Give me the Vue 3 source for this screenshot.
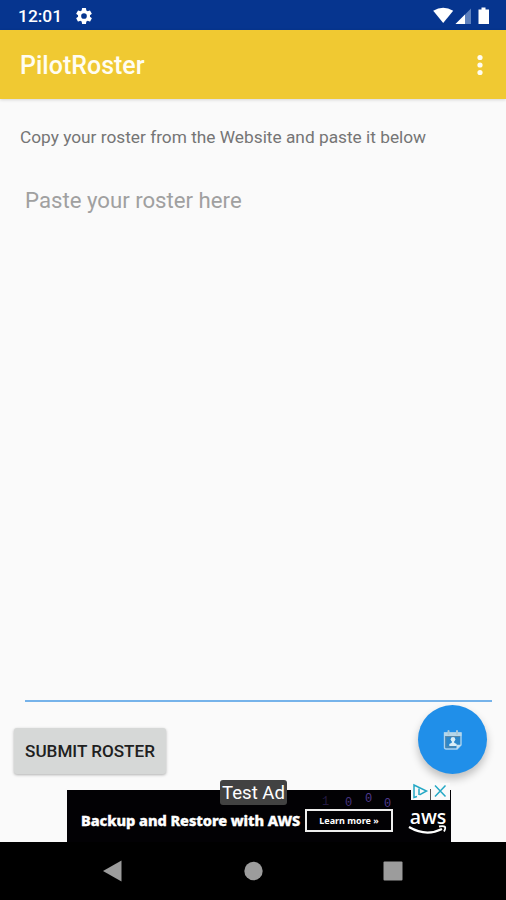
<template>
  <div class="screen">
    <header class="status-bar">
      <span class="clock">12:01</span>
      <svg class="gear" viewBox="0 0 24 24" width="20" height="20">
        <path fill="#fff" fill-rule="evenodd" d="M19.14 12.94c.04-.3.06-.61.06-.94s-.02-.64-.07-.94l2.03-1.58a.49.49 0 0 0 .12-.61l-1.92-3.32a.49.49 0 0 0-.59-.22l-2.39.96a7 7 0 0 0-1.62-.94l-.36-2.54a.48.48 0 0 0-.48-.41h-3.84a.48.48 0 0 0-.47.41l-.36 2.54a7.3 7.3 0 0 0-1.62.94l-2.39-.96a.48.48 0 0 0-.59.22L2.74 8.87a.48.48 0 0 0 .12.61l2.03 1.58a6 6 0 0 0 0 1.88l-2.03 1.58a.49.49 0 0 0-.12.61l1.92 3.32c.12.22.37.29.59.22l2.39-.96c.5.38 1.03.7 1.62.94l.36 2.54c.05.24.24.41.48.41h3.84c.24 0 .44-.17.47-.41l.36-2.54a7.3 7.3 0 0 0 1.62-.94l2.39.96c.22.08.47 0 .59-.22l1.92-3.32a.48.48 0 0 0-.12-.61zM12 15.4a3.4 3.4 0 1 1 0-6.8 3.4 3.4 0 0 1 0 6.8z" />
      </svg>
      <svg class="signals" viewBox="0 0 60 20" width="60" height="20">
        <path fill="#fff" d="M-.8 4.800Q9.200-1.500 19.200 4.800L9.200 17z" />
        <path fill="#5d80bd" d="M37 2.500v15.500H21.500z" />
        <path fill="#fff" d="M31 8.500v9.500h-9.500z" />
        <path fill="#fff" d="M47.500 1.500h4v2h3.500v14.500H44.500V3.500h3z" />
      </svg>
    </header>

    <div class="toolbar">
      <h1>PilotRoster</h1>
      <button class="more" aria-label="More options">
        <svg viewBox="0 0 6 22" width="6" height="22">
          <circle cx="3" cy="3.500" r="2.600" />
          <circle cx="3" cy="11" r="2.600" />
          <circle cx="3" cy="18.500" r="2.600" />
        </svg>
      </button>
    </div>

    <main class="content">
      <p class="hint">Copy your roster from the Website and paste it below</p>
      <div class="field">
        <textarea v-model="roster" class="roster" placeholder="Paste your roster here" spellcheck="false"></textarea>
      </div>
      <div class="actions">
        <button class="submit">SUBMIT ROSTER</button>
        <button class="fab" aria-label="Calendar">
          <svg viewBox="0 0 20 22" width="20" height="22">
            <path fill="#2a87cc" stroke="#a9d2ef" stroke-width="1.400" d="M1.500 4h16.500v12l-4 4H3q-1.500 0-1.500-1.500z" />
            <path fill="#b4d6ea" d="M1 3.500h17.500V7H1z" />
            <path fill="none" stroke="#68889a" stroke-width=".8" d="M2.800 7.500h14M2.800 7.500v10.500h9" />
            <path fill="#c3e0f0" d="M13.500 20.300v-4.600h4.700z" />
            <path stroke="#a9c9d9" stroke-width="2" stroke-linecap="round" d="M5.500 2v3M14 2v3" />
            <circle cx="10" cy="10.300" r="2.300" fill="#d8edf7" />
            <path fill="#d8edf7" d="M8.800 11h2.400v2.800l2.500 1.200v2H6.300v-2l2.500-1.200z" />
          </svg>
        </button>
      </div>
    </main>

    <div class="ad-row">
      <div class="banner">
        <svg class="digits" viewBox="0 0 115 52" width="115" height="52">
          <g fill="#59409e">
            <text v-for="(d, i) in digits" :key="i" :x="d.x" :y="d.y" :opacity="d.o">{{ d.t }}</text>
          </g>
        </svg>
        <span class="slogan">Backup and Restore with AWS</span>
        <span class="learn">Learn more »</span>
        <div class="aws">
          <span>aws</span>
          <svg viewBox="0 0 40 12" width="40" height="12">
            <path fill="none" stroke="#fff" stroke-width="2.300" d="M1 2q17 10 33 2" />
            <path fill="none" stroke="#fff" stroke-width="1.800" d="M31 1.500q9-2 5 5" />
          </svg>
        </div>
        <span class="test-label">Test Ad</span>
        <svg class="ad-choices" viewBox="0 0 40 17" width="40" height="17">
          <path fill="#fafafa" d="M0 0h39v17H0z" />
          <path stroke="#555" d="M19.500 6v11" />
          <g fill="none" stroke="#24a8c5" stroke-width="1.500">
            <path d="M6 13.500l-3 1V2L15.500 8l-7 3.800" />
            <path d="M8 5.500v6.500" />
            <path d="M24 2.500l10.500 11M34.500 2.500L24 13.500" />
          </g>
        </svg>
      </div>
    </div>

    <nav class="nav-bar">
      <svg viewBox="0 0 20 22" width="20" height="22"><path d="M0 11L18.500 .5v21z" /></svg>
      <svg viewBox="0 0 20 22" width="20" height="22"><circle cx="10.500" cy="11" r="9.200" /></svg>
      <svg viewBox="0 0 20 22" width="20" height="22"><rect x=".5" y="1.500" width="19" height="19" rx="1" /></svg>
    </nav>
  </div>
</template>

<script setup>
import { ref } from 'vue'

const roster = ref('')

// faint binary pattern behind the banner
const digits = [
  { x: 25, y: 15, t: '1', o: 0.4 },
  { x: 48, y: 16, t: '0', o: 0.8 },
  { x: 68, y: 12, t: '0', o: 0.9 },
  { x: 87, y: 17, t: '0', o: 0.9 },
]
</script>

<style>
body {
  margin: 0;
  background: #fafafa;
}
</style>

<style scoped>
.screen {
  width: 506px;
  height: 900px;
  display: flex;
  flex-direction: column;
  overflow: hidden;
  background: #fafafa;
  font-family: Roboto, "Liberation Sans", sans-serif;
}

button {
  border: 0;
  padding: 0;
  font-family: inherit;
}

.status-bar {
  height: 30px;
  flex: none;
  box-sizing: border-box;
  padding: 1px 12px 0 18px;
  display: flex;
  align-items: center;
  background: #06358f;
  color: #fff;
}

.clock {
  width: 56px;
  font-size: 17.4px;
  font-weight: 500;
  line-height: 30px;
}

.signals {
  margin-left: auto;
  overflow: visible;
}

.toolbar {
  height: 69px;
  flex: none;
  box-sizing: border-box;
  padding: 2px 23px 0 20px;
  display: flex;
  align-items: center;
  justify-content: space-between;
  background: #f0c932;
  box-shadow: 0 1px 3px rgba(0, 0, 0, 0.15);
  color: #fffdf2;
}

h1 {
  margin: 0;
  font-size: 25px;
  font-weight: 500;
}

.more {
  display: flex;
  margin-bottom: 2px;
  background: none;
}

.more svg {
  fill: #fffdf2;
}

.content {
  flex: 1;
  display: flex;
  flex-direction: column;
  min-height: 0;
}

.hint {
  margin: 27px 0 0 20px;
  font-size: 17.3px;
  line-height: 22px;
  color: #757575;
}

.field {
  height: 554px;
  flex: none;
  box-sizing: border-box;
  margin: 0 14px 0 25px;
  border-bottom: 2px solid #76b3ea;
}

.roster {
  display: block;
  width: 100%;
  height: 100%;
  box-sizing: border-box;
  padding: 38px 0 0;
  border: 0;
  outline: 0;
  resize: none;
  background: none;
  font: 22.2px/28px Roboto, "Liberation Sans", sans-serif;
}

.roster::placeholder {
  color: #a0a0a0;
}

.actions {
  display: flex;
  justify-content: space-between;
  align-items: flex-start;
  padding: 3px 19px 0 14px;
}

.submit {
  width: 152px;
  height: 46px;
  margin-top: 23px;
  border-radius: 3px;
  background: #d6d8d7;
  box-shadow: 0 1px 3px rgba(0, 0, 0, 0.3);
  color: #202020;
  font-size: 17.1px;
  font-weight: 500;
  white-space: nowrap;
}

.fab {
  width: 69px;
  height: 69px;
  border-radius: 50%;
  display: flex;
  align-items: center;
  justify-content: center;
  background: #208fe9;
  box-shadow: 0 5px 9px rgba(0, 0, 0, 0.24);
}

.ad-row {
  flex: none;
  display: flex;
  justify-content: center;
  padding-left: 12px;
}

.banner {
  position: relative;
  width: 384px;
  height: 52px;
  box-sizing: border-box;
  padding: 0 3px 0 14px;
  display: flex;
  align-items: center;
  background: #020104;
  color: #fff;
}

.digits {
  position: absolute;
  left: 230px;
  top: 0;
  font: 12px "Liberation Mono", monospace;
}

.slogan {
  width: 224px;
  padding-top: 8px;
  font: 800 14.6px/20px "Noto Sans", sans-serif;
  letter-spacing: -0.05px;
  -webkit-text-stroke: 0.4px #fff;
  white-space: nowrap;
}

.learn {
  width: 88px;
  height: 23px;
  margin-top: 9px;
  box-sizing: border-box;
  border: 2px solid #eee;
  font: 700 9px/19px "Noto Sans", sans-serif;
  text-align: center;
}

.aws {
  width: 40px;
  margin-left: auto;
  padding-top: 10px;
  display: flex;
  flex-direction: column;
  align-items: center;
}

.aws span {
  font: 600 19.5px/22px "Open Sans", sans-serif;
}

.aws svg {
  margin-top: -3px;
}

.test-label {
  position: absolute;
  left: 153px;
  top: -10px;
  width: 67px;
  height: 25px;
  border-radius: 3px;
  background: #424242;
  font-size: 18.6px;
  line-height: 27px;
  text-align: center;
  white-space: nowrap;
}

.ad-choices {
  position: absolute;
  right: 0;
  top: -7px;
}

.nav-bar {
  height: 58px;
  flex: none;
  display: flex;
  align-items: center;
  justify-content: space-between;
  box-sizing: border-box;
  padding: 0 103px;
  background: #000;
}

.nav-bar svg {
  fill: #9c9c9c;
}
</style>
